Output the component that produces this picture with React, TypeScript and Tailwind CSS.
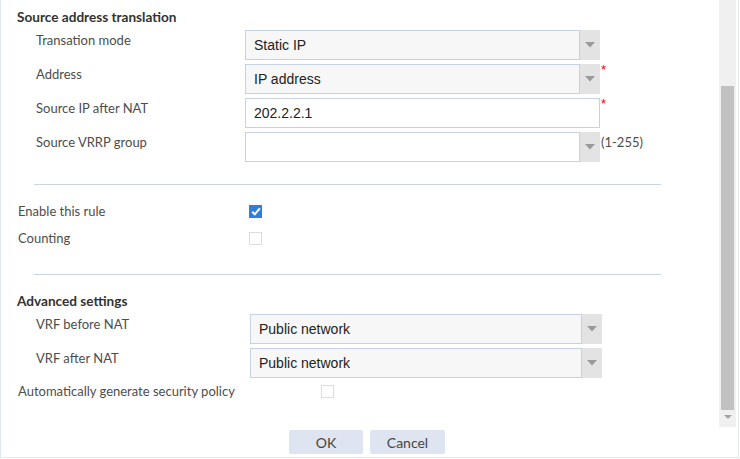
import React from 'react';

const labelFont = { fontFamily: 'Lato, "Noto Sans", sans-serif' };

function Caret() {
  return (
    <svg width="10" height="6" viewBox="0 0 10 6" className="block">
      <path d="M0 0 H10 L5 5.5 Z" fill="#9a9a9a" />
    </svg>
  );
}

function Select({ value, width, tone = 'gray' }: { value: string; width: string; tone?: 'gray' | 'white' }) {
  return (
    <div className={`flex h-[30px] ${width}`}>
      <div
        className={`flex-1 flex items-center border border-[#c6d1e2] px-[8px] text-[14px] text-[#222] ${
          tone === 'gray' ? 'bg-[#f7f7f7]' : 'bg-white'
        }`}
        style={{ fontFamily: '"Liberation Sans", Arial, sans-serif' }}
      >
        {value}
      </div>
      <div className="w-[20px] bg-[#e3e3e3] flex items-center justify-center">
        <Caret />
      </div>
    </div>
  );
}

function Row({ label, children, control }: { label: string; children: React.ReactNode; control: string }) {
  return (
    <div className="flex">
      <div className={`pl-[35px] ${control} shrink-0 pt-[1px] leading-[18px] text-[13px] text-[#4d4d4d]`}>{label}</div>
      {children}
    </div>
  );
}

function Star() {
  return (
    <span
      className="self-start text-[#f00] text-[13px] leading-[13px] -mt-[1px] ml-[1px]"
      style={{ fontFamily: '"Liberation Sans", sans-serif' }}
    >
      *
    </span>
  );
}

function Checkbox({ checked }: { checked?: boolean }) {
  if (checked) {
    return (
      <div className="w-[13px] h-[13px] bg-[#2f7ddf] flex items-center justify-center">
        <svg width="10" height="9" viewBox="0 0 10 9">
          <path d="M1.2 4.8 L3.8 7.3 L8.8 1.3" stroke="#fff" strokeWidth="2" fill="none" />
        </svg>
      </div>
    );
  }
  return <div className="w-[13px] h-[13px] border border-[#dcdcdc] bg-white" />;
}

function CheckRow({ label, checked, control }: { label: string; checked?: boolean; control: string }) {
  return (
    <div className="flex h-[27px] items-center">
      <div className={`pl-[17px] ${control} shrink-0 text-[13px] text-[#4d4d4d]`}>{label}</div>
      <Checkbox checked={checked} />
    </div>
  );
}

export default function App() {
  return (
    <div className="w-[740px] h-[459px] bg-white" style={labelFont}>
      <div className="w-[739px] h-[458px] border-l border-r border-b border-[#e1e8f2] flex flex-col">
        <div className="h-[427px] flex">
          <div className="flex-1 overflow-hidden">
            <div className="pl-[16px] pt-[8px] h-[26px] leading-[18px] text-[13.6px] font-bold text-[#333]">
              Source address translation
            </div>
            <div className="mt-[4px] flex flex-col gap-[4px]">
              <Row label="Transation mode" control="w-[244px]">
                <Select value="Static IP" width="w-[355px]" />
              </Row>
              <Row label="Address" control="w-[244px]">
                <Select value="IP address" width="w-[355px]" />
                <Star />
              </Row>
              <Row label="Source IP after NAT" control="w-[244px]">
                <div
                  className="w-[355px] h-[30px] flex items-center border border-[#c6d1e2] bg-white px-[8px] text-[14px] text-[#222]"
                  style={{ fontFamily: '"Liberation Sans", Arial, sans-serif' }}
                >
                  202.2.2.1
                </div>
                <Star />
              </Row>
              <Row label="Source VRRP group" control="w-[244px]">
                <Select value="" width="w-[355px]" tone="white" />
                <span className="ml-[1px] mt-[1px] leading-[18px] text-[13px] text-[#4d4d4d]">(1-255)</span>
              </Row>
            </div>
            <div className="ml-[33px] w-[627px] mt-[22px] h-[1px] bg-[#c9d5e5]" />
            <div className="mt-[13px]">
              <CheckRow label="Enable this rule" checked control="w-[248px]" />
              <CheckRow label="Counting" control="w-[248px]" />
            </div>
            <div className="ml-[33px] w-[627px] mt-[22px] h-[1px] bg-[#c9d5e5]" />
            <div className="pl-[16px] mt-[17px] h-[18px] leading-[18px] text-[13.6px] font-bold text-[#333]">
              Advanced settings
            </div>
            <div className="mt-[4px] flex flex-col gap-[4px]">
              <Row label="VRF before NAT" control="w-[249px]">
                <Select value="Public network" width="w-[352px]" />
              </Row>
              <Row label="VRF after NAT" control="w-[249px]">
                <Select value="Public network" width="w-[352px]" />
              </Row>
            </div>
            <CheckRow label="Automatically generate security policy" control="w-[320px]" />
          </div>
          <div className="w-[17px] mr-[2px] bg-[#f0f0f0] flex flex-col items-center">
            <div className="mt-[86px] w-[13px] h-[324px] bg-[#c1c1c1]" />
            <div className="mt-[5px]">
              <svg width="8" height="4" viewBox="0 0 8 4" className="block">
                <path d="M0 0 H8 L4 4 Z" fill="#a3a3a3" />
              </svg>
            </div>
          </div>
        </div>
        <div className="pt-[3px] pl-[288px] flex gap-[7px]">
          <button className="w-[74px] h-[24px] rounded-[2px] bg-[#dfe5f0] text-[14px] text-[#444]">OK</button>
          <button className="w-[75px] h-[24px] rounded-[2px] bg-[#dfe5f0] text-[14px] text-[#444]">Cancel</button>
        </div>
      </div>
    </div>
  );
}
